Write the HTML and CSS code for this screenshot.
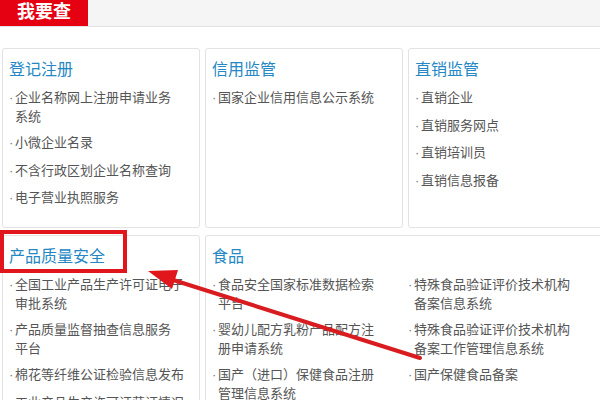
FILE: index.html
```html
<!DOCTYPE html>
<html lang="zh-CN">
<head>
<meta charset="utf-8">
<title>我要查</title>
<link rel="stylesheet" href="styles.css">
</head>
<body>
<div class="page">
  <div class="topbar"><div class="tab">我要查</div></div>
  <div class="grid">
    <section class="card">
      <h3 class="title">登记注册</h3>
      <ul class="list">
        <li>企业名称网上注册申请业务<br>系统</li>
        <li>小微企业名录</li>
        <li>不含行政区划企业名称查询</li>
        <li>电子营业执照服务</li>
      </ul>
    </section>
    <section class="card">
      <h3 class="title">信用监管</h3>
      <ul class="list">
        <li>国家企业信用信息公示系统</li>
      </ul>
    </section>
    <section class="card">
      <h3 class="title">直销监管</h3>
      <ul class="list">
        <li>直销企业</li>
        <li>直销服务网点</li>
        <li>直销培训员</li>
        <li>直销信息报备</li>
      </ul>
    </section>
    <section class="card">
      <h3 class="title">产品质量安全</h3>
      <ul class="list">
        <li class="nw">全国工业产品生产许可证电子<br>审批系统</li>
        <li>产品质量监督抽查信息服务<br>平台</li>
        <li class="nw">棉花等纤维公证检验信息发布</li>
        <li class="nw">工业产品生产许可证获证情况</li>
      </ul>
    </section>
    <section class="card wide">
      <h3 class="title">食品</h3>
      <ul class="list cols">
        <li>食品安全国家标准数据检索平台</li>
        <li>特殊食品验证评价技术机构备案信息系统</li>
        <li>婴幼儿配方乳粉产品配方注册申请系统</li>
        <li>特殊食品验证评价技术机构备案工作管理信息系统</li>
        <li>国产（进口）保健食品注册管理信息系统</li>
        <li>国产保健食品备案</li>
      </ul>
    </section>
  </div>
  <svg class="annot" width="600" height="400" viewBox="0 0 600 400">
    <rect x="2" y="232" width="123" height="39" fill="none" stroke="#e0161c" stroke-width="4"/>
    <line x1="170" y1="279" x2="420" y2="358" stroke="#d81c1f" stroke-width="4" stroke-linecap="round"/>
    <polygon points="148,271 178,270 172,289" fill="#e0161c"/>
  </svg>
</div>
</body>
</html>
```

FILE: styles.css
```css
html, body {
  margin: 0;
  padding: 0;
  background: #fff;
  overflow: hidden;
}
body {
  font-family: "Noto Sans CJK SC", "Noto Sans", sans-serif;
  color: #555;
}
.page {
  position: relative;
  width: 620px;
  height: 400px;
  overflow: hidden;
}
.topbar {
  height: 26px;
  background: #f5f5f5;
  border-bottom: 1px solid #e2e2e2;
}
.tab {
  width: 71px;
  height: 26px;
  padding-left: 17px;
  background: #e50012;
  color: #fff;
  font-size: 18px;
  font-weight: bold;
  line-height: 21px;
}
.grid {
  display: grid;
  grid-template-columns: 198px 198px 198px;
  grid-template-rows: 180px 180px;
  column-gap: 5px;
  row-gap: 7px;
  margin-top: 21px;
  padding-left: 2px;
}
.card {
  border: 1px solid #e3e3e3;
  border-radius: 3px;
  padding: 9px 6px 0 6px;
  box-sizing: border-box;
  background: #fff;
}
.wide {
  grid-column: span 2;
}
.title {
  margin: 0 0 10px 0;
  font-size: 16px;
  line-height: 20px;
  font-weight: normal;
  color: #2588c4;
}
.list {
  list-style: none;
  margin: 0;
  padding: 0;
  width: 178px;
  font-size: 13px;
  line-height: 17.5px;
  color: #555;
}
.list li {
  padding-left: 6px;
  margin-bottom: 9px;
}
.list li::before {
  content: "·";
  display: inline-block;
  width: 6px;
  margin-left: -6px;
  font-family: "Liberation Sans", sans-serif;
  color: #777;
}
.list li.nw {
  white-space: nowrap;
}
.cols {
  display: grid;
  width: auto;
  grid-template-columns: 196px 168px;
  row-gap: 9px;
}
.cols li {
  margin-bottom: 0;
  width: 162px;
}
.annot {
  position: absolute;
  left: 0;
  top: 0;
}
```
